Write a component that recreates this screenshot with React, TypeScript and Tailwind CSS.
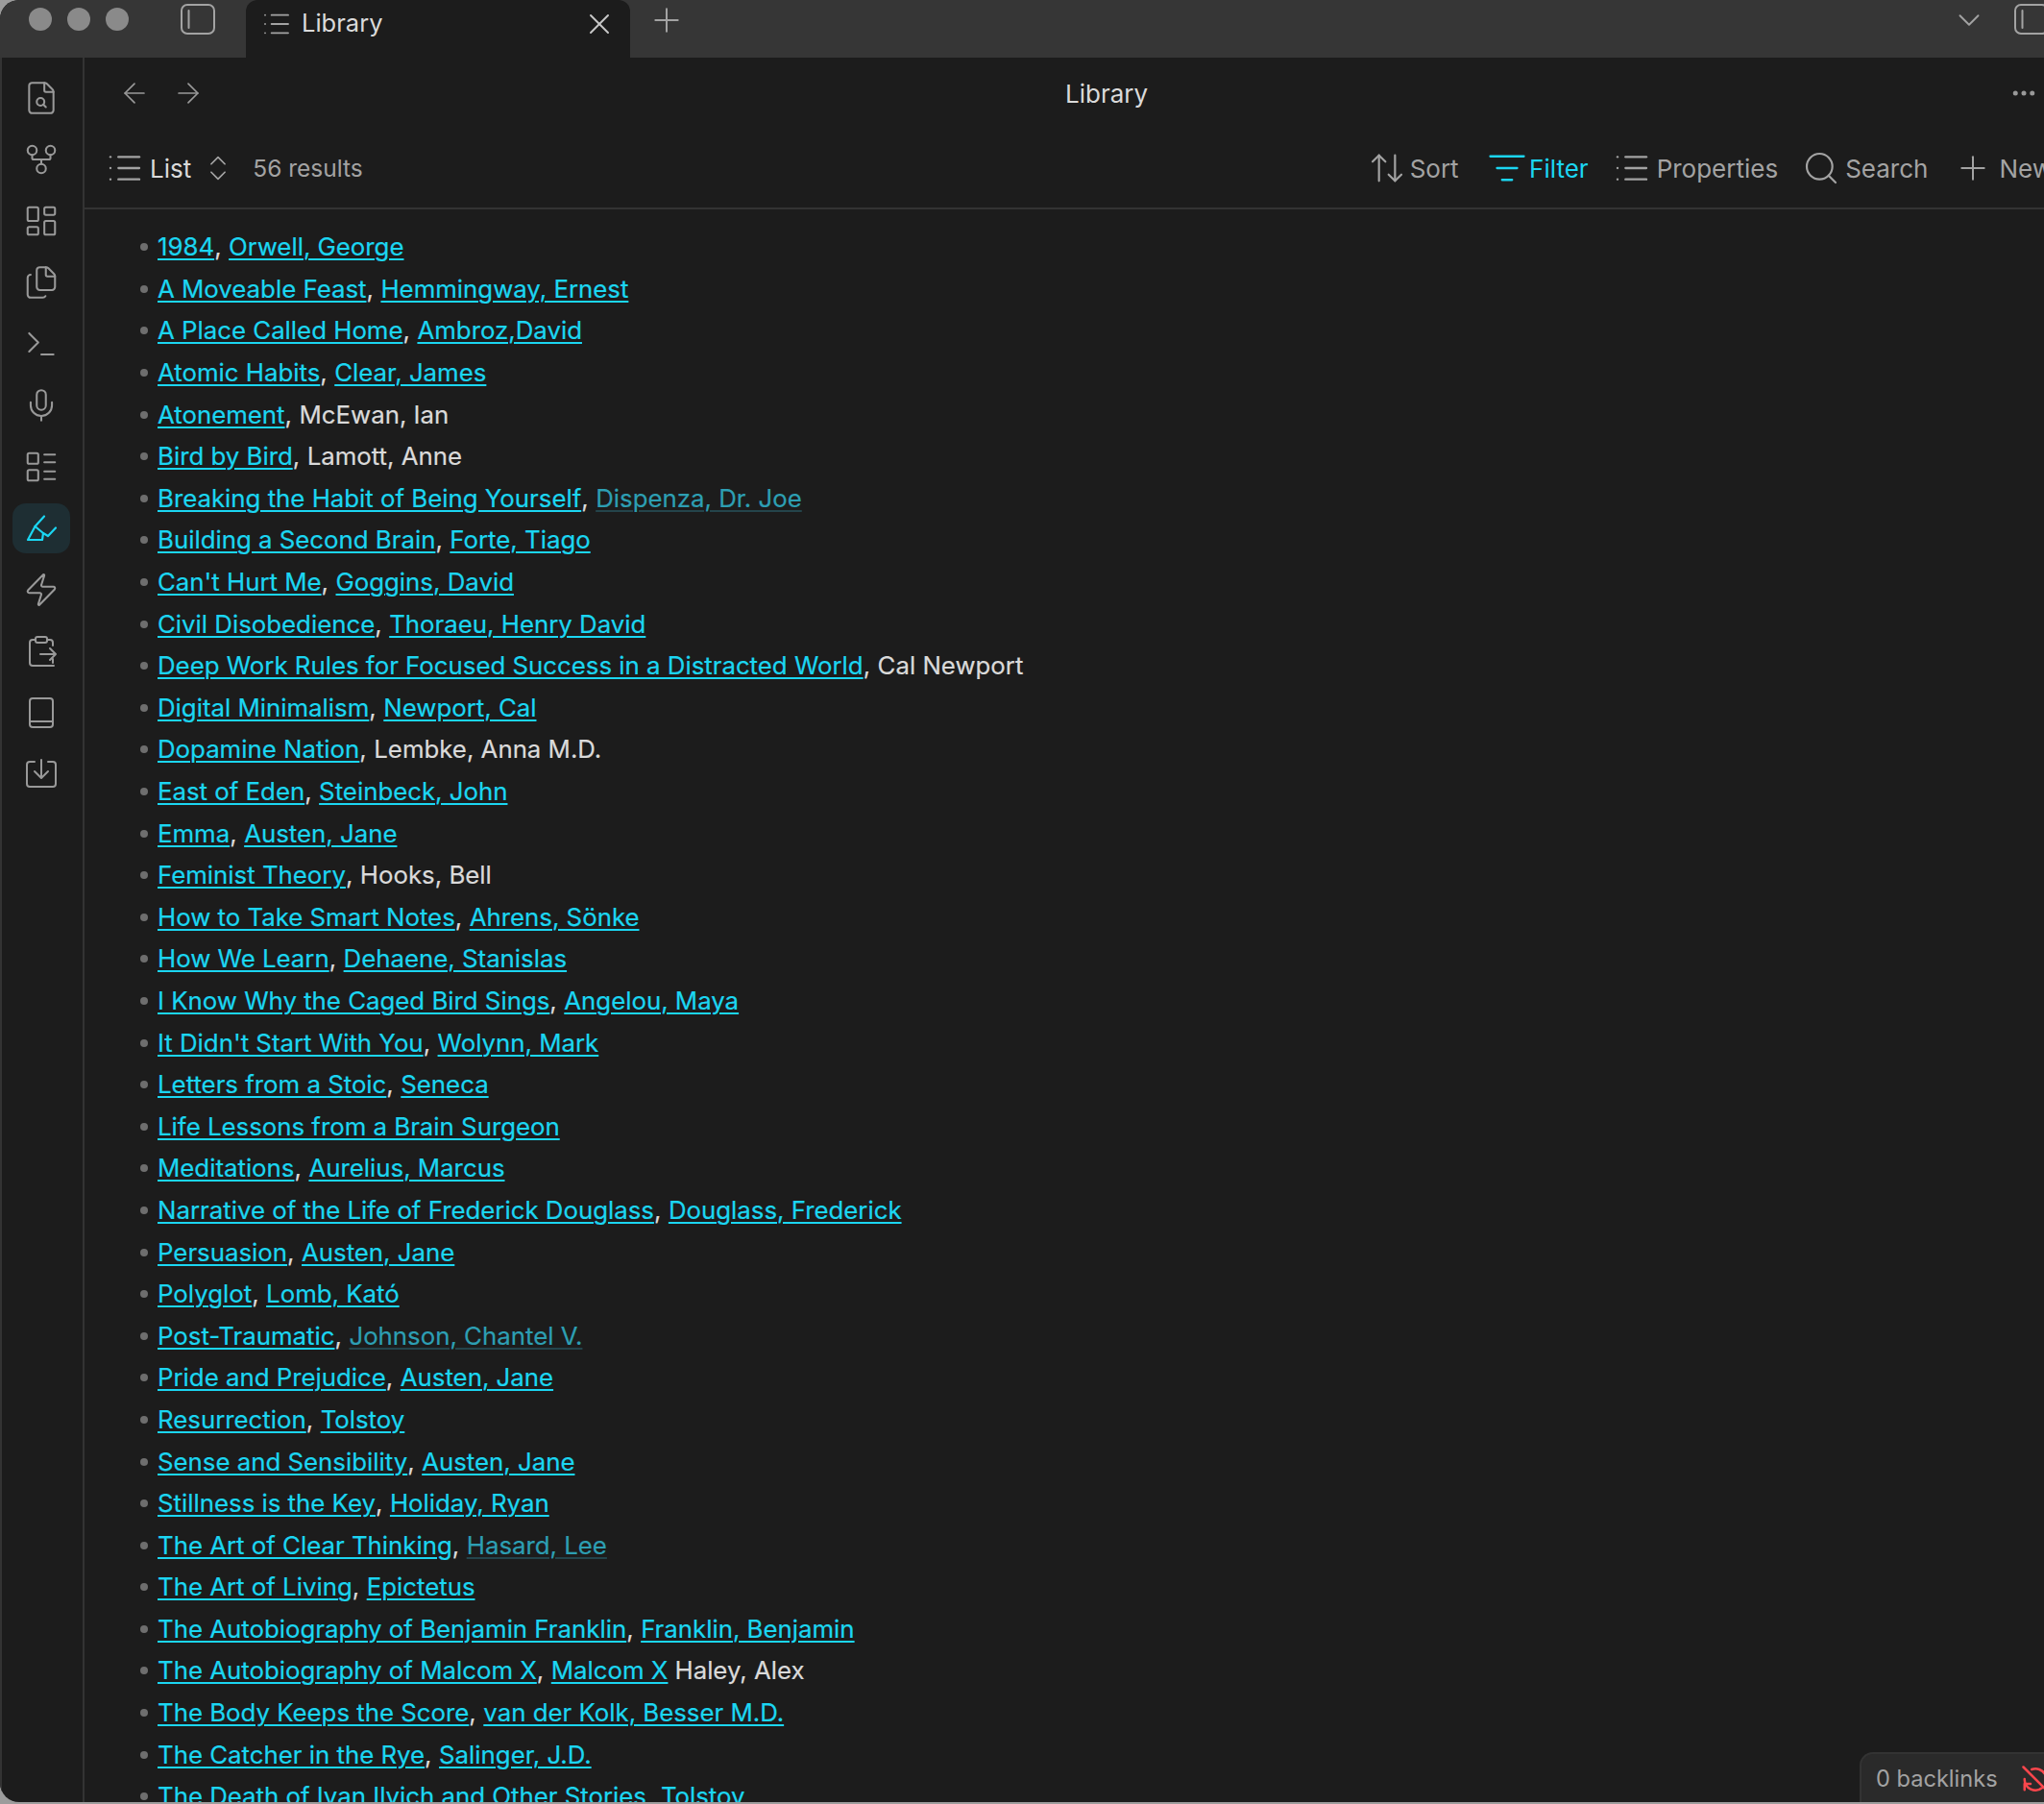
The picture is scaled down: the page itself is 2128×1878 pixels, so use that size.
import React from "react";
import {
  ArrowLeft,
  ArrowRight,
  ArrowUpDown,
  ChevronDown,
  ChevronsUpDown,
  Ellipsis,
  FileSearch,
  Files,
  GitFork,
  LayoutDashboard,
  LayoutList,
  List,
  ListFilter,
  Mic,
  Plus,
  Search,
  Terminal,
  X,
  Zap,
} from "lucide-react";

type Kind = "link" | "plain" | "dim";
type Book = { title: string; author: string; kind?: Kind; rest?: string };

const books: Book[] = [
  { title: "1984", author: "Orwell, George" },
  { title: "A Moveable Feast", author: "Hemmingway, Ernest" },
  { title: "A Place Called Home", author: "Ambroz,David" },
  { title: "Atomic Habits", author: "Clear, James" },
  { title: "Atonement", author: "McEwan, Ian", kind: "plain" },
  { title: "Bird by Bird", author: "Lamott, Anne", kind: "plain" },
  { title: "Breaking the Habit of Being Yourself", author: "Dispenza, Dr. Joe", kind: "dim" },
  { title: "Building a Second Brain", author: "Forte, Tiago" },
  { title: "Can't Hurt Me", author: "Goggins, David" },
  { title: "Civil Disobedience", author: "Thoraeu, Henry David" },
  { title: "Deep Work Rules for Focused Success in a Distracted World", author: "Cal Newport", kind: "plain" },
  { title: "Digital Minimalism", author: "Newport, Cal" },
  { title: "Dopamine Nation", author: "Lembke, Anna M.D.", kind: "plain" },
  { title: "East of Eden", author: "Steinbeck, John" },
  { title: "Emma", author: "Austen, Jane" },
  { title: "Feminist Theory", author: "Hooks, Bell", kind: "plain" },
  { title: "How to Take Smart Notes", author: "Ahrens, Sönke" },
  { title: "How We Learn", author: "Dehaene, Stanislas" },
  { title: "I Know Why the Caged Bird Sings", author: "Angelou, Maya" },
  { title: "It Didn't Start With You", author: "Wolynn, Mark" },
  { title: "Letters from a Stoic", author: "Seneca" },
  { title: "Life Lessons from a Brain Surgeon", author: "" },
  { title: "Meditations", author: "Aurelius, Marcus" },
  { title: "Narrative of the Life of Frederick Douglass", author: "Douglass, Frederick" },
  { title: "Persuasion", author: "Austen, Jane" },
  { title: "Polyglot", author: "Lomb, Kató" },
  { title: "Post-Traumatic", author: "Johnson, Chantel V.", kind: "dim" },
  { title: "Pride and Prejudice", author: "Austen, Jane" },
  { title: "Resurrection", author: "Tolstoy" },
  { title: "Sense and Sensibility", author: "Austen, Jane" },
  { title: "Stillness is the Key", author: "Holiday, Ryan" },
  { title: "The Art of Clear Thinking", author: "Hasard, Lee", kind: "dim" },
  { title: "The Art of Living", author: "Epictetus" },
  { title: "The Autobiography of Benjamin Franklin", author: "Franklin, Benjamin" },
  { title: "The Autobiography of Malcom X", author: "Malcom X", rest: "Haley, Alex" },
  { title: "The Body Keeps the Score", author: "van der Kolk, Besser M.D." },
  { title: "The Catcher in the Rye", author: "Salinger, J.D." },
  { title: "The Death of Ivan Ilyich and Other Stories", author: "Tolstoy" },
];

function Toggle() {
  return (
    <svg width="36" height="32" viewBox="0 0 36 32" fill="none" stroke="currentColor" strokeWidth="2" strokeLinecap="round" className="shrink-0">
      <rect x="1" y="1" width="34" height="30" rx="6" />
      <path d="M8.500 7v18" />
    </svg>
  );
}

function BookIcon() {
  return (
    <svg width="32" height="32" viewBox="0 0 32 32" fill="none" stroke="currentColor" strokeWidth="2" strokeLinecap="round" strokeLinejoin="round">
      <rect x="4" y="1" width="24" height="30" rx="3" />
      <path d="M4 25h24" />
    </svg>
  );
}

function ExportClip() {
  return (
    <svg width="32" height="32" viewBox="0 0 32 32" fill="none" stroke="currentColor" strokeWidth="2" strokeLinecap="round" strokeLinejoin="round">
      <rect x="10" y="1" width="12" height="6" rx="2" />
      <path d="M10 4H7a3 3 0 0 0-3 3v21a3 3 0 0 0 3 3h22M22 4h3a3 3 0 0 1 3 3v3M28 24v4M15 19h16M25 13l6 6-6 6" />
    </svg>
  );
}

function ImportBox() {
  return (
    <svg width="34" height="32" viewBox="0 0 34 32" fill="none" stroke="currentColor" strokeWidth="2" strokeLinecap="round" strokeLinejoin="round">
      <path d="M10 3H5a3 3 0 0 0-3 3v20a3 3 0 0 0 3 3h24a3 3 0 0 0 3-3V6a3 3 0 0 0-3-3h-5M17 1v18M10 13l7 7 7-7" />
    </svg>
  );
}

function Marker() {
  return (
    <svg width="32" height="28" viewBox="0 0 32 28" fill="none" stroke="currentColor" strokeWidth="2.200" strokeLinecap="round" strokeLinejoin="round">
      <path d="M19 1.500 9.500 12 2 26h15l1-7 5 3 8-8.500" />
      <path d="m9.500 12 8.500 7" />
    </svg>
  );
}

function SyncOff() {
  return (
    <svg width="30" height="30" viewBox="0 0 24 24" fill="none" stroke="#fb464c" strokeWidth="2" strokeLinecap="round" strokeLinejoin="round">
      <path d="M2 2l20 20M9 4a9 9 0 0 1 11 4M3 12a9 9 0 0 0 15 7M3 21v-5h5" />
    </svg>
  );
}

const ribbon = [
  <FileSearch size={38} strokeWidth={1.3} />,
  <GitFork size={38} strokeWidth={1.3} />,
  <LayoutDashboard size={38} strokeWidth={1.3} />,
  <Files size={38} strokeWidth={1.3} />,
  <Terminal size={38} strokeWidth={1.3} />,
  <Mic size={38} strokeWidth={1.3} />,
  <LayoutList size={38} strokeWidth={1.3} />,
  <Marker />,
  <Zap size={38} strokeWidth={1.3} />,
  <ExportClip />,
  <BookIcon />,
  <ImportBox />,
];

const linkClass = "text-[#1bd6f2] underline decoration-[2px] underline-offset-[3px]";

function Row({ book }: { book: Book }) {
  const kind = book.kind ?? "link";
  return (
    <li className="flex h-[43.6px] shrink-0 items-center whitespace-nowrap">
      <span className="mr-[10px] h-[8px] w-[8px] rounded-full bg-[#6e6e6e]" />
      <a className={linkClass}>{book.title}</a>
      {book.author !== "" && <span className="mr-[7.500px] text-[#dadada]">,</span>}
      {kind === "link" && book.author !== "" && <a className={linkClass}>{book.author}</a>}
      {kind === "plain" && <span className="text-[#dadada]">{book.author}</span>}
      {kind === "dim" && (
        <a className="text-[#2d9fb3] underline decoration-[#24444b] decoration-[2px] underline-offset-[3px]">{book.author}</a>
      )}
      {book.rest && <span className="ml-[7px] text-[#dadada]">{book.rest}</span>}
    </li>
  );
}

export default function App() {
  return (
    <div className="h-[1878px] w-[2128px] overflow-hidden bg-[#9c9c9c] font-['Inter',sans-serif]">
      <div className="relative flex h-[1876px] w-[2128px] flex-col overflow-hidden rounded-[20px] rounded-r-none bg-[#1c1c1c]">
        {/* tab bar */}
        <div className="flex h-[60px] shrink-0 bg-[#363636] text-[#a3a3a3]">
          <div className="flex w-[256px] shrink-0 items-start">
            <div className="ml-[30px] mt-[8px] flex gap-[16px]">
              <span className="h-[24px] w-[24px] rounded-full bg-[#8a8a8a]" />
              <span className="h-[24px] w-[24px] rounded-full bg-[#8a8a8a]" />
              <span className="h-[24px] w-[24px] rounded-full bg-[#8a8a8a]" />
            </div>
            <div className="ml-[54px] mt-[4px]">
              <Toggle />
            </div>
          </div>
          <div className="flex w-[400px] shrink-0 items-center rounded-t-[12px] bg-[#1c1c1c] pb-[11px] pl-[16px] pr-[14px] text-[#dadada]">
            <List size={32} strokeWidth={1.4} className="text-[#a3a3a3]" />
            <span className="ml-[10px] text-[25.500px]">Library</span>
            <X size={36} strokeWidth={1.3} className="ml-auto text-[#c8c8c8]" />
          </div>
          <Plus size={40} strokeWidth={1.2} className="ml-[18px] mt-[1px]" />
          <ChevronDown size={38} strokeWidth={1.2} className="ml-auto mt-[2px]" />
          <div className="ml-[28px] mr-[-5px] mt-[4px]">
            <Toggle />
          </div>
        </div>

        <div className="flex min-h-0 flex-1">
          {/* ribbon */}
          <div className="flex w-[88px] shrink-0 flex-col items-center gap-[12px] border-l-2 border-r-2 border-l-[#333] border-r-[#333] pr-[2px] pt-[16px] text-[#999]">
            {ribbon.map((icon, i) => (
              <div
                key={i}
                className={
                  i === 7
                    ? "flex h-[52px] w-[60px] items-center justify-center rounded-[14px] bg-[#1e2e33] text-[#1bd6f2]"
                    : "flex h-[52px] w-[60px] items-center justify-center"
                }
              >
                {icon}
              </div>
            ))}
          </div>

          {/* main */}
          <div className="min-w-0 flex-1">
            <div className="flex h-[74px] items-center pl-[35px] text-[#999]">
              <ArrowLeft size={34} strokeWidth={1.2} />
              <ArrowRight size={34} strokeWidth={1.2} className="ml-[22px]" />
              <span className="ml-[896px] text-[26px] text-[#dadada]">Library</span>
              <Ellipsis size={30} strokeWidth={2} className="ml-auto mr-[6px]" />
            </div>
            <div className="flex h-[84px] items-center overflow-hidden border-b-2 border-[#333] pl-[22px] text-[26px] text-[#a3a3a3]">
              <List size={40} strokeWidth={1.4} className="shrink-0" />
              <span className="ml-[6px] text-[#dadada]">List</span>
              <ChevronsUpDown size={34} strokeWidth={1.2} className="ml-[11px] shrink-0" />
              <span className="ml-[19px] text-[24.500px]">56 results</span>
              <div className="ml-auto mr-[-9px] flex shrink-0 items-center whitespace-nowrap">
                <ArrowUpDown size={40} strokeWidth={1.3} />
                <span className="ml-[3.500px]">Sort</span>
                <ListFilter size={42} strokeWidth={1.3} className="ml-[29.500px] text-[#1bd6f2]" />
                <span className="ml-[2px] text-[#1bd6f2]">Filter</span>
                <List size={40} strokeWidth={1.4} className="ml-[25px]" />
                <span className="ml-[6px]">Properties</span>
                <Search size={40} strokeWidth={1.3} className="ml-[25px]" />
                <span className="ml-[5px]">Search</span>
                <Plus size={40} strokeWidth={1.2} className="ml-[27px]" />
                <span className="ml-[7px]">New</span>
              </div>
            </div>
            <ul className="flex flex-col pl-[58px] pt-[17.500px] text-[25.800px] leading-[40px] [-webkit-text-stroke:0.2px]">
              {books.map((b) => (
                <Row key={b.title} book={b} />
              ))}
            </ul>
          </div>
        </div>

        {/* backlinks pill */}
        <div className="absolute bottom-0 right-0 flex h-[52px] w-[192px] items-center rounded-tl-[14px] border-l-2 border-t-2 border-[#333] bg-[#2a2a2a] pl-[15px] pt-[2px] text-[23.600px] text-[#a3a3a3]">
          <span className="whitespace-nowrap">0 backlinks</span>
          <span className="ml-[24px] shrink-0">
            <SyncOff />
          </span>
        </div>
      </div>
    </div>
  );
}
